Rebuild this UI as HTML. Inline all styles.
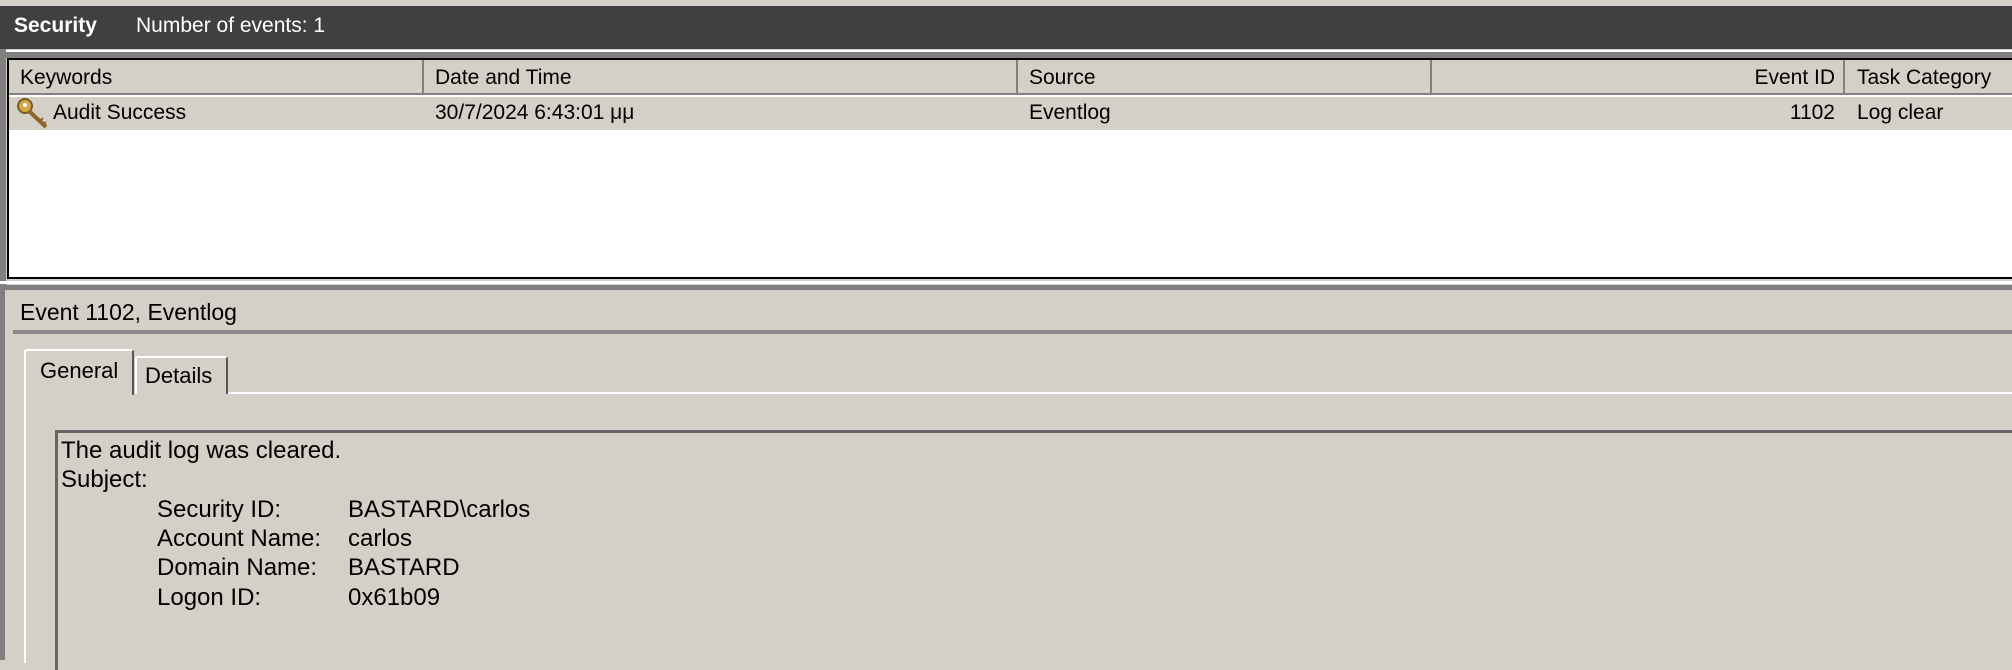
<!DOCTYPE html>
<html><head><meta charset="utf-8"><style>
*{margin:0;padding:0;box-sizing:border-box}
body{width:2012px;height:656px;overflow:hidden;background:#d4d0c8;font-family:"Liberation Sans",sans-serif;font-size:21px;color:#000;position:relative}
.a{position:absolute;white-space:nowrap}
.d{font-size:24px}
</style></head><body>
<div class="a" style="left:0;top:6px;width:2012px;height:43px;background:#404040"></div>
<div class="a" style="left:14px;top:14px;color:#fff;font-weight:bold">Security</div>
<div class="a" style="left:136px;top:14px;color:#fff">Number of events: 1</div>
<div class="a" style="left:0;top:50px;width:2012px;height:2px;background:#fff"></div>
<div class="a" style="left:0;top:52px;width:2012px;height:6px;background:#808080"></div>
<div class="a" style="left:0;top:49px;width:6px;height:240px;background:#808080"></div>
<!-- list -->
<div class="a" style="left:7px;top:58px;width:2010px;height:221px;background:#fff;border:2px solid #000"></div>
<div class="a" style="left:9px;top:60px;width:2010px;height:35px;background:#d4d0c8;border-bottom:2px solid #808080"></div>
<div class="a" style="left:422px;top:60px;width:2px;height:35px;background:#808080"></div>
<div class="a" style="left:1016px;top:60px;width:2px;height:35px;background:#808080"></div>
<div class="a" style="left:1430px;top:60px;width:2px;height:35px;background:#808080"></div>
<div class="a" style="left:1843px;top:60px;width:2px;height:35px;background:#808080"></div>
<div class="a" style="left:20px;top:66px">Keywords</div>
<div class="a" style="left:435px;top:66px">Date and Time</div>
<div class="a" style="left:1029px;top:66px">Source</div>
<div class="a" style="left:1700px;top:66px;width:135px;text-align:right">Event ID</div>
<div class="a" style="left:1857px;top:66px">Task Category</div>
<div class="a" style="left:9px;top:97px;width:2010px;height:33px;background:#d4d0c8"></div>
<svg class="a" style="left:16px;top:97px" width="36" height="34"><circle cx="9" cy="9" r="7" fill="#d4a848" stroke="#7a5a1e" stroke-width="2"/><circle cx="9" cy="8" r="2" fill="#fff"/><path d="M13 14 L30 30" stroke="#8a6428" stroke-width="4"/><path d="M24 24l3-3M27 28l3-3" stroke="#8a6428" stroke-width="2"/></svg>
<div class="a" style="left:53px;top:101px">Audit Success</div>
<div class="a" style="left:435px;top:101px">30/7/2024 6:43:01 μμ</div>
<div class="a" style="left:1029px;top:101px">Eventlog</div>
<div class="a" style="left:1700px;top:101px;width:135px;text-align:right">1102</div>
<div class="a" style="left:1857px;top:101px">Log clear</div>
<!-- splitter -->
<div class="a" style="left:0;top:281px;width:2012px;height:3px;background:#fff"></div>
<div class="a" style="left:0;top:285px;width:2012px;height:5px;background:#808080"></div>
<div class="a" style="left:0;top:290px;width:5px;height:370px;background:#808080"></div>
<div class="a" style="left:20px;top:299px;font-size:23px">Event 1102, Eventlog</div>
<div class="a" style="left:13px;top:330px;width:2000px;height:4px;background:#8a8a8a"></div>
<!-- tabs -->
<div class="a" style="left:24px;top:349px;width:110px;height:46px;border:2px solid #fff;border-bottom:none;border-right:2px solid #555;border-radius:3px 3px 0 0;background:#d4d0c8"></div>
<div class="a" style="left:40px;top:358px;font-size:22px">General</div>
<div class="a" style="left:135px;top:356px;width:93px;height:38px;border:2px solid #fff;border-bottom:none;border-right:2px solid #555;border-radius:3px 3px 0 0"></div>
<div class="a" style="left:145px;top:363px;font-size:22px">Details</div>
<div class="a" style="left:228px;top:392px;width:1800px;height:2px;background:#fff"></div>
<div class="a" style="left:24px;top:393px;width:2px;height:270px;background:#fff"></div>
<!-- text box -->
<div class="a" style="left:55px;top:430px;width:2000px;height:240px;border:3px solid #666;border-right:none;border-bottom:none"></div>
<div class="a d" style="left:61px;top:437px">The audit log was cleared.</div>
<div class="a d" style="left:61px;top:466px">Subject:</div>
<div class="a d" style="left:157px;top:496px">Security ID:</div>
<div class="a d" style="left:348px;top:496px">BASTARD\carlos</div>
<div class="a d" style="left:157px;top:525px">Account Name:</div>
<div class="a d" style="left:348px;top:525px">carlos</div>
<div class="a d" style="left:157px;top:554px">Domain Name:</div>
<div class="a d" style="left:348px;top:554px">BASTARD</div>
<div class="a d" style="left:157px;top:584px">Logon ID:</div>
<div class="a d" style="left:348px;top:584px">0x61b09</div>
</body></html>
